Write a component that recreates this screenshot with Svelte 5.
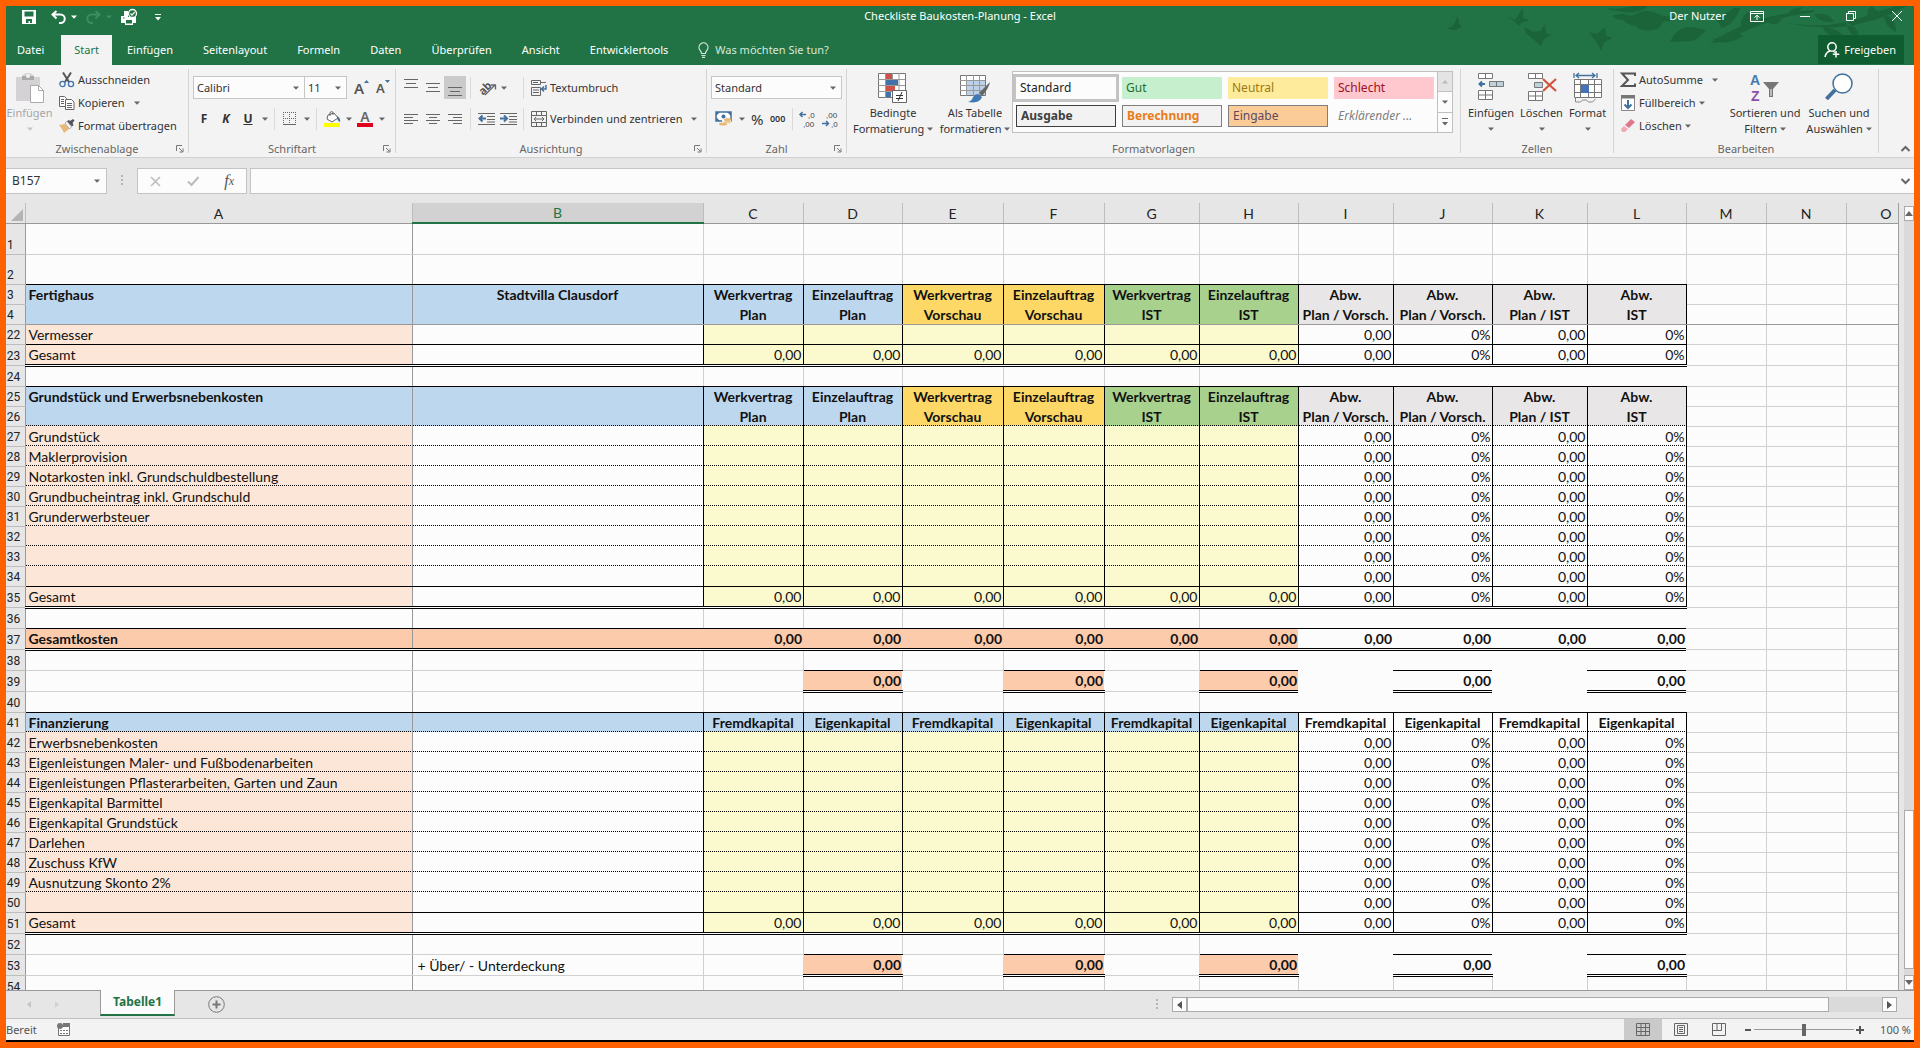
<script lang="ts">
	type Row = {
		n: number;
		kind: string;
		bottom: string;
		size?: string;
		a?: string;
		b?: string;
		cells?: string[];
	};

	const tabs = ['Datei', 'Start', 'Einfügen', 'Seitenlayout', 'Formeln', 'Daten', 'Überprüfen', 'Ansicht', 'Entwicklertools'];
	const letters = 'ABCDEFGHIJKLMNO'.split('');

	const styles = [
		{ t: 'Standard', c: 'std' },
		{ t: 'Gut', c: 'good' },
		{ t: 'Neutral', c: 'neutral' },
		{ t: 'Schlecht', c: 'bad' },
		{ t: 'Ausgabe', c: 'output' },
		{ t: 'Berechnung', c: 'calc' },
		{ t: 'Eingabe', c: 'entry' },
		{ t: 'Erklärender ...', c: 'note' }
	];

	const none = Array(10).fill('');
	const six = Array(6).fill('0,00');
	const deviation = ['0,00', '0%', '0,00', '0%'];
	const open = [...Array(6).fill(''), ...deviation];
	const total = [...six, ...deviation];
	const sum = Array(10).fill('0,00');
	const diff = sum.map((v, i) => (i % 2 ? v : ''));
	const top = ['Werkvertrag', 'Einzelauftrag', 'Werkvertrag', 'Einzelauftrag', 'Werkvertrag', 'Einzelauftrag', 'Abw.', 'Abw.', 'Abw.', 'Abw.'];
	const sub = ['Plan', 'Plan', 'Vorschau', 'Vorschau', 'IST', 'IST', 'Plan / Vorsch.', 'Plan / Vorsch.', 'Plan / IST', 'IST'];
	const capital = sum.map((_, i) => (i % 2 ? 'Eigenkapital' : 'Fremdkapital'));

	function items(start: number, names: string[]): Row[] {
		return names.map((a, i) => ({
			n: start + i,
			kind: 'item',
			bottom: i === names.length - 1 ? 'line' : 'dots',
			a,
			cells: open
		}));
	}

	const rows: Row[] = [
		{ n: 1, kind: 'blank', bottom: 'grid', size: 'taller' },
		{ n: 2, kind: 'blank', bottom: 'line', size: 'tall' },
		{ n: 3, kind: 'head', bottom: 'none', a: 'Fertighaus', b: 'Stadtvilla Clausdorf', cells: top },
		{ n: 4, kind: 'head', bottom: 'freeze', cells: sub },
		...items(122, ['Vermesser']),
		{ n: 123, kind: 'item', bottom: 'double', size: 'mid', a: 'Gesamt', cells: total },
		{ n: 124, kind: 'gap', bottom: 'line', size: 'mid' },
		{ n: 125, kind: 'head', bottom: 'none', a: 'Grundstück und Erwerbsnebenkosten', cells: top },
		{ n: 126, kind: 'head', bottom: 'dots', cells: sub },
		...items(127, [
			'Grundstück',
			'Maklerprovision',
			'Notarkosten inkl. Grundschuldbestellung',
			'Grundbucheintrag inkl. Grundschuld',
			'Grunderwerbsteuer',
			'',
			'',
			''
		]),
		{ n: 135, kind: 'item', bottom: 'double', size: 'mid', a: 'Gesamt', cells: total },
		{ n: 136, kind: 'gap', bottom: 'line', size: 'mid' },
		{ n: 137, kind: 'sum', bottom: 'double', size: 'mid', a: 'Gesamtkosten', cells: sum },
		{ n: 138, kind: 'gap', bottom: 'alt-line', size: 'mid' },
		{ n: 139, kind: 'diff', bottom: 'alt-double', size: 'mid', cells: diff },
		{ n: 140, kind: 'gap', bottom: 'line', size: 'mid' },
		{ n: 141, kind: 'fin', bottom: 'dots', a: 'Finanzierung', cells: capital },
		...items(142, [
			'Erwerbsnebenkosten',
			'Eigenleistungen Maler- und Fußbodenarbeiten',
			'Eigenleistungen Pflasterarbeiten, Garten und Zaun',
			'Eigenkapital Barmittel',
			'Eigenkapital Grundstück',
			'Darlehen',
			'Zuschuss KfW',
			'Ausnutzung Skonto 2%',
			''
		]),
		{ n: 151, kind: 'item', bottom: 'double', size: 'mid', a: 'Gesamt', cells: total },
		{ n: 152, kind: 'gap', bottom: 'alt-line', size: 'mid' },
		{ n: 153, kind: 'diff', bottom: 'alt-double', size: 'mid', b: '+ Über/ - Unterdeckung', cells: diff },
		{ n: 154, kind: 'blank', bottom: 'grid', size: 'mid' }
	];

	function fill(row: Row, i: number) {
		if (i > 11) return '';
		if (row.kind === 'head') return i < 4 ? 'blue' : i < 6 ? 'gold' : i < 8 ? 'green' : 'grey';
		if (row.kind === 'fin') return i < 8 ? 'blue' : '';
		if (row.kind === 'item') return i === 0 ? 'peach' : i > 1 && i < 8 ? 'cream' : '';
		if (row.kind === 'sum') return i < 8 ? 'salmon' : '';
		if (row.kind === 'diff') return i > 2 && i < 8 && i % 2 ? 'salmon' : '';
		return '';
	}

	function right(row: Row, i: number) {
		if (i === 0) return 'r-freeze';
		if (i > 11 || row.kind === 'blank') return 'r-grid';
		if (row.kind === 'gap') return i < 7 ? 'r-grid' : '';
		if (row.kind === 'diff') return i === 1 ? 'r-grid' : '';
		if (row.kind === 'sum') return '';
		return 'r-line';
	}

	function bottom(row: Row, i: number) {
		if (row.bottom === 'freeze') return 'b-freeze';
		if (i > 11) return 'b-grid';
		if (row.bottom.startsWith('alt-')) {
			if (i > 2 && i % 2) return 'b-' + row.bottom.slice(4);
			return i < 8 ? 'b-grid' : '';
		}
		return 'b-' + row.bottom;
	}

	function align(row: Row, i: number) {
		if (i === 0) return '';
		if (row.kind === 'head' || row.kind === 'fin') return 'center';
		return i === 1 ? 'indent' : 'num';
	}

	function cell(row: Row, i: number) {
		if (i === 0) return row.a ?? '';
		if (i === 1) return row.b ?? '';
		return (row.cells ?? none)[i - 2] ?? '';
	}

	let cellName = $state('B157');
	let formula = $state('');
	let zoom = $state(50);
</script>

<svelte:head><title>Checkliste Baukosten-Planung - Excel</title></svelte:head>

{#snippet caret()}
	<svg class="caret" width="6" height="4" viewBox="0 0 6 4" aria-hidden="true"><path d="M0 0.5h6L3 3.8z" fill="currentColor" /></svg>
{/snippet}

{#snippet footer(title, launcher = true)}
	<div class="foot">
		<span>{title}</span>
		{#if launcher}
			<button class="launch" aria-label={title + ' Optionen'}>
				<svg width="8" height="8" viewBox="0 0 8 8" fill="none" stroke="#777"><path d="M0.500 6V0.500H6M3 3l3.500 3.500M7 3.500V7H3.500" /></svg>
			</button>
		{/if}
	</div>
{/snippet}

{#snippet lines(kind, y)}
	<svg width="16" height="22" viewBox="0 0 16 22" stroke="#666" fill="none">
		{#if kind === 'mid'}
			<path d={`M1 ${y + 0.5}h14M3 ${y + 4.5}h10M1 ${y + 8.5}h14`} />
		{:else if kind === 'left'}
			<path d="M1 6.500h14M1 9.500h9M1 12.500h14M1 15.500h9" />
		{:else if kind === 'center'}
			<path d="M1 6.500h14M4 9.500h8M1 12.500h14M4 15.500h8" />
		{:else}
			<path d="M1 6.500h14M6 9.500h9M1 12.500h14M6 15.500h9" />
		{/if}
	</svg>
{/snippet}

{#snippet indent(out)}
	<svg width="17" height="14" viewBox="0 0 17 14" fill="none" stroke="#666">
		<path d="M0 1.500h17M9 4.500h8M9 7.500h8M0 12.500h17M9 10h8" />
		<path d={out ? 'M8 6.500H2M4.500 3.500l-3 3 3 3' : 'M0 6.500h6M4 3.500l3 3-3 3'} stroke="#41719c" stroke-width="2" />
	</svg>
{/snippet}

<div class="window">
	<header>
		<svg class="leaves" width="480" height="48" viewBox="0 0 480 48" fill="#1b6339" aria-hidden="true">
			<path d="M13 22q8 0 10-12 2 4 2 8 4 2 0 4-4 4-12 0zM73 10l8 4 8-12 0 10 6 2-8 3-2 3-4-4zM90 21l9 5 8-1 4-7 1 10 6 1-8 4-3 7-7-6-8-7zM155 26l8 2 8-7 1 9 7 2-9 4-3 9-4-8z" />
			<path d="M172 2q14 2 26-2h16q-8 8-24 6t-18-4zM178 10q8-4 20 0 14-8 24-3 12 6 22 2-4 8-14 6l-6 8q-18 4-22-3-10-2-12-6-8 0-12-4z" />
			<path d="M236 36q6-15 22-15l14 3q-8 10-14 11zM278 33q10 0 16-7 10 0 16 4-14 8-26 6zM282 12q10-4 18-10l6 0q-2 8-10 16l-8 4z" />
			<path d="M276 37Q320 8 380 4l0 2Q330 12 290 36zM308 24q-4-10 6-18 6 8 2 16zM332 16q6-6 16-4-4 10-16 4zM352 10q4-8 16-9l-4 8z" />
			<path d="M342 14q50 14 100-8l20-6h10q-20 12-40 16-40 12-90-2zM388 20q14 2 22 10-16 4-22-10zM412 16q2 12 12 16 2-10-12-16zM436 12q-6-8 2-12l6 6zM450 8q12 4 12 18-12-6-12-18zM380 8q16-2 20 8-14 2-20-8z" />
		</svg>
		<div class="titlebar">
			<div class="quick">
				<button class="save" aria-label="Speichern">
					<svg width="14" height="14" viewBox="0 0 14 14"><path d="M0 0h14v14H0z" fill="#fff" /><path d="M2.500 1.500h9v5h-9zM4 9h6v4H8v-2H6.500v2H4z" fill="#217346" /></svg>
				</button>
				<button aria-label="Rückgängig">
					<svg width="15" height="14" viewBox="0 0 15 14" fill="none" stroke="#fff" stroke-width="2"><path d="M5.500 1L1.500 4.500l4 4M2 4.500h7.500a4 4 0 0 1 0 8.500H8" /></svg>
					{@render caret()}
				</button>
				<button class="off" aria-label="Wiederholen">
					<svg width="15" height="14" viewBox="0 0 15 14" fill="none" stroke="currentColor" stroke-width="2"><path d="M9.500 1l4 3.500-4 4M13 4.500H5.500a4 4 0 0 0 0 8.500H7" /></svg>
					{@render caret()}
				</button>
				<button aria-label="Seitenansicht und Drucken">
					<svg width="17" height="16" viewBox="0 0 17 16"><path d="M0 7h3V2h4v6h8v6h-3v2H4v-2H0z" fill="#fff" /><circle cx="11.500" cy="4.500" r="4" fill="#217346" stroke="#fff" stroke-width="1.300" /><path d="M9.500 4.500l1.500 1.600 2.800-3.200" fill="none" stroke="#fff" stroke-width="1.200" /><path d="M5 11h6v3.500H5z" fill="#217346" /><path d="M2 9h1.500" stroke="#217346" /></svg>
				</button>
				<button class="more" aria-label="Symbolleiste anpassen">
					<svg width="6" height="7" viewBox="0 0 6 7" fill="#fff"><path d="M0 0h6v1H0zM0 3h6L3 6.500z" /></svg>
				</button>
			</div>
			<h1>Checkliste Baukosten-Planung - Excel</h1>
			<div class="controls">
				<span>Der Nutzer</span>
				<button aria-label="Menüband-Anzeigeoptionen">
					<svg width="14" height="11" viewBox="0 0 14 11" fill="none" stroke="#fff"><path d="M0.500 0.500h13v10h-13zM0.500 2.500h13M7 9V4.500M4.500 6.500L7 4.200l2.500 2.300" /></svg>
				</button>
				<button aria-label="Minimieren"><svg width="10" height="10" viewBox="0 0 10 10" stroke="#fff"><path d="M0 5.500h10" /></svg></button>
				<button aria-label="Verkleinern">
					<svg width="10" height="10" viewBox="0 0 10 10" fill="none" stroke="#fff"><path d="M0.500 2.500h7v7h-7zM2.500 2V0.500h7v7H8" /></svg>
				</button>
				<button aria-label="Schließen"><svg width="10" height="10" viewBox="0 0 10 10" stroke="#fff"><path d="M0 0l10 10M10 0L0 10" /></svg></button>
			</div>
		</div>
		<nav class="tabs">
			{#each tabs as t}
				<button class="tab" class:active={t === 'Start'}>{t}</button>
			{/each}
			<button class="tab tell">
				<svg width="11" height="15" viewBox="0 0 11 15" fill="none" stroke="#d6e8dc" stroke-width="1.200"><path d="M3.500 10.500Q3.500 8.500 2 7.200a4.500 4.500 0 1 1 7 0Q7.500 8.500 7.500 10.500zM3.500 12.500h4M4 14.300h3" /></svg>
				Was möchten Sie tun?
			</button>
			<button class="share">
				<svg width="16" height="16" viewBox="0 0 16 16" fill="none" stroke="#fff" stroke-width="1.500"><circle cx="8" cy="5" r="4.200" /><path d="M1 15q1-5 5-6M9.500 9.500l1.500 1M12 9v6.500M8.800 12.300h6.500" /></svg>
				Freigeben
			</button>
		</nav>
	</header>

	<section class="ribbon" aria-label="Menüband">
		<div class="group clip">
			<div class="body">
				<button class="big off">
					<svg width="28" height="30" viewBox="0 0 28 30"><path d="M0 4h6q1-4 6-4t6 4h6v24H0z" fill="#d4d2d4" /><path d="M6 3h12v4H6z" fill="#aaa" /><circle cx="12" cy="3" r="2" fill="#f3f3f3" /><path d="M14.500 12.500h8l5 5v12h-13z" fill="#fff" stroke="#aaa" /><path d="M22.500 12.500v5h5" fill="none" stroke="#aaa" /></svg>
					<span>Einfügen</span>
					<span>{@render caret()}</span>
				</button>
				<div class="stack">
					<button>
						<svg width="16" height="16" viewBox="0 0 16 16" fill="none"><path d="M4 0.500l6 9.500M12 0.500L6 10" stroke="#555" stroke-width="2" /><circle cx="3.500" cy="12" r="2.600" stroke="#3f72a8" stroke-width="1.300" /><circle cx="12" cy="12" r="2.600" stroke="#3f72a8" stroke-width="1.300" /></svg>
						Ausschneiden
					</button>
					<button>
						<svg width="16" height="14" viewBox="0 0 16 14" fill="#fff" stroke="#666"><path d="M0.500 0.500h5l2 2v8h-7zM2 3.500h3M2 5.500h3M2 7.500h3" /><path d="M6.500 3.500h6l2.500 2.500v7.500H6.500zM8 7.500h5M8 9.500h5M8 11.500h5" /></svg>
						Kopieren <i class="wide">{@render caret()}</i>
					</button>
					<button>
						<svg width="16" height="14" viewBox="0 0 16 14"><path d="M0 6l6-1 4 5-5 4q-1-3-5-8z" fill="#e8b877" /><path d="M6 4l2-1.500L12.500 8l-2 2z" fill="#fff" stroke="#777" stroke-width="0.600" /><path d="M8 2l2-1 1 1L14 0l1.500 1.500-2 2.500 1 2-1.500 1.500z" fill="#55505a" /></svg>
						Format übertragen
					</button>
				</div>
			</div>
			{@render footer('Zwischenablage')}
		</div>

		<div class="group font">
			<div class="lines">
				<div class="line">
					<label class="combo family"><select aria-label="Schriftart"><option>Calibri</option></select>{@render caret()}</label>
					<label class="combo size"><select aria-label="Schriftgrad"><option>11</option></select>{@render caret()}</label>
					<button class="letter grow">A<svg width="5" height="3" viewBox="0 0 5 3"><path d="M0 3h5L2.500 0z" fill="#41719c" /></svg></button>
					<button class="letter shrink">A<svg width="5" height="3" viewBox="0 0 5 3"><path d="M0 0h5L2.500 3z" fill="#41719c" /></svg></button>
				</div>
				<div class="line biu">
					<button><b>F</b></button>
					<button><b><em>K</em></b></button>
					<button><b><u>U</u></b></button>
					{@render caret()}
					<i class="sep"></i>
					<button aria-label="Rahmen"><svg width="14" height="14" viewBox="0 0 14 14" fill="none" stroke="#666"><path d="M0.500 0v12M6.500 0v12M12.500 0v12M0 0.500h13M0 6.500h13" stroke-dasharray="1 1" /><path d="M0 12.500h13" /></svg></button>
					{@render caret()}
					<i class="sep"></i>
					<button aria-label="Füllfarbe"><svg width="17" height="16" viewBox="0 0 17 16"><path d="M4 4l6-2 4 5-6 4-5-3z" fill="#fff" stroke="#666" /><path d="M6 5V1.500q2-2 3 0V4" fill="none" stroke="#666" /><path d="M13 5q4 2 3 6-3-1-3-6z" fill="#41719c" /><path d="M0 12h16v4H0z" fill="#ffff00" /></svg></button>
					{@render caret()}
					<button aria-label="Schriftfarbe"><span class="fontcolor">A</span></button>
					{@render caret()}
				</div>
			</div>
			{@render footer('Schriftart')}
		</div>

		<div class="group align">
			<div class="lines">
				<div class="line">
					<button class="sq" aria-label="Oben">{@render lines('mid', 2)}</button>
					<button class="sq" aria-label="Mitte">{@render lines('mid', 6)}</button>
					<button class="sq on" aria-label="Unten">{@render lines('mid', 10)}</button>
					<i class="sep"></i>
					<button class="sq turn" aria-label="Ausrichtung">
						<svg width="17" height="16" viewBox="0 0 17 16"><text x="-2" y="12" font-size="11" font-weight="700" fill="#555" transform="rotate(-45 5 8)">ab</text><path d="M5 15L15 5M11 5h4.500v4.500" fill="none" stroke="#666" stroke-width="1.300" /></svg>
						{@render caret()}
					</button>
					<i class="sep"></i>
					<button class="wrap">
						<svg width="16" height="16" viewBox="0 0 16 16" fill="none" stroke="#666"><path d="M0.500 0.500h9v4h-9zM2 2.500h5M0.500 7.500h9v8h-9zM2 10h6M2 12.500h6M10 2.500h5" /><path d="M15 5v4h-4M13 6.500L10.500 9l2.500 2.500" stroke="#41719c" stroke-width="1.500" /></svg>
						Textumbruch
					</button>
				</div>
				<div class="line">
					<button class="sq" aria-label="Linksbündig">{@render lines('left', 0)}</button>
					<button class="sq" aria-label="Zentriert">{@render lines('center', 0)}</button>
					<button class="sq" aria-label="Rechtsbündig">{@render lines('right', 0)}</button>
					<i class="sep"></i>
					<button class="sq" aria-label="Einzug verkleinern">{@render indent(true)}</button>
					<button class="sq" aria-label="Einzug vergrößern">{@render indent(false)}</button>
					<i class="sep"></i>
					<button class="wrap">
						<svg width="16" height="16" viewBox="0 0 16 16" fill="none" stroke="#666"><path d="M0.500 0.500h15v15H0.500zM0.500 4.500h15M0.500 11.500h15M5.500 0v4M10.500 0v4M5.500 12v4M10.500 12v4M3 8h10M5 6L3 8l2 2M11 6l2 2-2 2" /></svg>
						Verbinden und zentrieren <i class="wide">{@render caret()}</i>
					</button>
				</div>
			</div>
			{@render footer('Ausrichtung')}
		</div>

		<div class="group number">
			<div class="lines">
				<div class="line">
					<label class="combo format"><select aria-label="Zahlenformat"><option>Standard</option></select>{@render caret()}</label>
				</div>
				<div class="line nums">
					<button aria-label="Buchhaltungszahlenformat"><svg width="17" height="16" viewBox="0 0 17 16"><path d="M1 1h15v9H1z" fill="#fff" stroke="#41719c" stroke-width="1.500" /><path d="M1 1h4L1 5zM16 1h-4l4 4zM1 10V6l4 4z" fill="#41719c" /><circle cx="8.500" cy="5.500" r="2" fill="#41719c" /><path d="M7 9h9v6H7z" fill="#f3f3f3" /><ellipse cx="12.500" cy="8.500" rx="3.500" ry="1.500" fill="#e8b877" /><ellipse cx="12.500" cy="11" rx="3.500" ry="1.300" fill="#eccb9a" /><ellipse cx="8" cy="13" rx="4" ry="1.500" fill="#e8b877" /></svg></button>
					{@render caret()}
					<button class="pct">%</button>
					<button class="ooo">000</button>
					<i class="sep"></i>
					<button class="dec" aria-label="Dezimalstelle hinzufügen"><svg width="16" height="18" viewBox="0 0 16 18"><path d="M7 4.500H1M3.500 2L1 4.500 3.500 7" fill="none" stroke="#41719c" stroke-width="1.500" /><text x="9" y="8">,0</text><text x="4" y="17">,00</text></svg></button>
					<button class="dec" aria-label="Dezimalstelle entfernen"><svg width="16" height="18" viewBox="0 0 16 18"><text x="4" y="8">,00</text><path d="M0 13.500h6M4 11l2.500 2.500L4 16" fill="none" stroke="#41719c" stroke-width="1.500" /><text x="9" y="17">,0</text></svg></button>
				</div>
			</div>
			{@render footer('Zahl')}
		</div>

		<div class="group formats">
			<div class="body">
				<button class="big cond">
					<svg width="30" height="30" viewBox="0 0 30 30"><path d="M0.500 0.500h27v24h-27z" fill="#fff" stroke="#777" /><path d="M7.500 0v25M14.500 0v25M21 0v25M0 6.500h27M0 12.500h27M0 18.500h27" stroke="#999" /><path d="M8 1h6v5H8zM8 13h9v5H8z" fill="#d0504a" /><path d="M8 7h12v5H8zM8 19h5v5H8z" fill="#4273a8" /><path d="M14.500 17.500h14v12h-14z" fill="#fff" stroke="#666" /><path d="M18 22.500h7M18 25.500h7M24 19l-4 9" stroke="#333" /></svg>
					<span>Bedingte</span>
					<span>Formatierung {@render caret()}</span>
				</button>
				<button class="big table">
					<svg width="30" height="30" viewBox="0 0 30 30"><path d="M0.500 2.500h25v20h-25z" fill="#fff" stroke="#777" /><path d="M7 8h18v14H7z" fill="#bcd0e8" /><path d="M6.500 2v21M13.500 2v21M19.500 2v21M0 7.500h25M0 12.500h25M0 17.500h25" stroke="#999" /><path d="M30 9L19 20l3 3q7-8 8-14z" fill="#666" /><path d="M18 21l4 3q-2 7-14 5 4-1 5-5 2-3 5-3z" fill="#3f7ab5" /></svg>
					<span>Als Tabelle</span>
					<span>formatieren {@render caret()}</span>
				</button>
				<div class="gallery">
					<div class="swatches">
						{#each styles as s}
							<button class="swatch {s.c}">{s.t}</button>
						{/each}
					</div>
					<div class="spin">
						<button class="dim" aria-label="Nach oben"><svg width="6" height="4" viewBox="0 0 6 4"><path d="M0 3.500h6L3 0z" fill="#bbb" /></svg></button>
						<button aria-label="Nach unten">{@render caret()}</button>
						<button aria-label="Mehr"><svg width="6" height="8" viewBox="0 0 6 8" fill="#666"><path d="M0 0h6v1H0zM0 4h6L3 7.500z" /></svg></button>
					</div>
				</div>
			</div>
			{@render footer('Formatvorlagen', false)}
		</div>

		<div class="group cells">
			<div class="body">
				<button class="big">
					<svg width="28" height="30" viewBox="0 0 28 30" fill="#fff" stroke="#777"><path d="M1.500 0.500h14v5h-14zM8.500 0.500v5M1.500 17.500h14v9h-14zM8.500 17.500v9M1.500 22h14" /><path d="M12.500 8.500h14v5h-14zM19.500 8.500v5" fill="#bfd2dc" /><path d="M8 11H2.500M5 8.500L2.500 11 5 13.500" fill="none" stroke="#41719c" stroke-width="2" /></svg>
					<span>Einfügen</span>
					<span>{@render caret()}</span>
				</button>
				<button class="big">
					<svg width="30" height="30" viewBox="0 0 30 30" fill="#fff" stroke="#777"><path d="M1.500 0.500h14v5h-14zM8.500 0.500v5M1.500 18.500h14v9h-14zM8.500 18.500v9M1.500 23h14" /><path d="M7.500 9.500h8v5h-8z" fill="#bfd2dc" /><path d="M16 6l13 12M29 6L16 18" stroke="#d2533c" stroke-width="2.200" /></svg>
					<span>Löschen</span>
					<span>{@render caret()}</span>
				</button>
				<button class="big">
					<svg width="30" height="30" viewBox="0 0 30 30" fill="#fff" stroke="#777"><path d="M1.500 6.500h27v18h-27zM7.500 6.500v18M15.500 6.500v18M21.500 6.500v18M1.500 11.500h27M1.500 19.500h27" /><path d="M8 12h8v8H8z" fill="#4273b5" stroke="none" /><path d="M1 0v5M24 0v5M3 2.500h19M6 0L3 2.500 6 5M19 0l3 2.500L19 5" fill="none" stroke="#41719c" stroke-width="1.300" /><path d="M2.500 25v4h5l2-2h4l2 2h4l3-3" fill="none" stroke="#888" /></svg>
					<span>Format</span>
					<span>{@render caret()}</span>
				</button>
			</div>
			{@render footer('Zellen', false)}
		</div>

		<div class="group edit">
			<div class="body">
				<div class="stack">
					<button>
						<svg width="16" height="16" viewBox="0 0 16 16" fill="none" stroke="#555" stroke-width="2"><path d="M15 4V1.500H2l6 6.500-6 6h13V11.500" /></svg>
						AutoSumme <i class="wide">{@render caret()}</i>
					</button>
					<button>
						<svg width="16" height="16" viewBox="0 0 16 16"><path d="M1.500 0.500h13v15h-13z" fill="#fff" stroke="#888" /><path d="M1 0h14v3.500H1z" fill="#777" /><path d="M8 5v8M4.500 9.500L8 13l3.500-3.500" fill="none" stroke="#41719c" stroke-width="2" /></svg>
						Füllbereich {@render caret()}
					</button>
					<button>
						<svg width="16" height="14" viewBox="0 0 16 14"><path d="M5 6l6-6 4 3-6 6z" fill="#e0788c" /><path d="M4 7l4 3-3 3H2L1 10z" fill="#f0a9b6" /></svg>
						Löschen {@render caret()}
					</button>
				</div>
				<button class="big sort">
					<svg width="30" height="30" viewBox="0 0 30 30"><text x="0" y="12" fill="#4579ad">A</text><text x="1" y="28" fill="#8b4fa8">Z</text><path d="M13 9h16l-6 7v8h-4v-8z" fill="#777" /><path d="M20.500 16h1v7h-1z" fill="#fff" /></svg>
					<span>Sortieren und</span>
					<span>Filtern {@render caret()}</span>
				</button>
				<button class="big find">
					<svg width="28" height="30" viewBox="0 0 28 30" fill="none"><path d="M1.500 26L10 17" stroke="#41719c" stroke-width="4" /><circle cx="17.500" cy="10.500" r="9.500" fill="#fff" stroke="#41719c" stroke-width="1.500" /></svg>
					<span>Suchen und</span>
					<span>Auswählen {@render caret()}</span>
				</button>
			</div>
			{@render footer('Bearbeiten', false)}
		</div>
		<button class="collapse" aria-label="Menüband reduzieren"><svg width="9" height="6" viewBox="0 0 9 6" fill="none" stroke="#666" stroke-width="2"><path d="M0.500 5l4-4 4 4" /></svg></button>
	</section>

	<section class="formula" aria-label="Bearbeitungsleiste">
		<div class="name"><input aria-label="Namenfeld" bind:value={cellName} /><button aria-label="Namen">{@render caret()}</button></div>
		<i class="dots"></i>
		<div class="fx">
			<button aria-label="Abbrechen"><svg width="11" height="11" viewBox="0 0 11 11" stroke="#bbb" stroke-width="1.500"><path d="M1 1l9 9M10 1l-9 9" /></svg></button>
			<button aria-label="Eingeben"><svg width="12" height="10" viewBox="0 0 12 10" fill="none" stroke="#bbb" stroke-width="2"><path d="M1 5.500L4.500 9 11.500 1" /></svg></button>
			<button class="fn" aria-label="Funktion einfügen">f<small>x</small></button>
		</div>
		<div class="entryline">
			<input aria-label="Formel" bind:value={formula} />
			<button aria-label="Erweitern"><svg width="9" height="6" viewBox="0 0 9 6" fill="none" stroke="#666" stroke-width="2"><path d="M0.500 1l4 4 4-4" /></svg></button>
		</div>
	</section>

	<main>
		<div class="sheet">
			<table>
				<colgroup>
					<col class="w-head" />
					{#each letters as l}
						<col class="w-{l}" />
					{/each}
				</colgroup>
				<thead>
					<tr>
						<th class="corner"><svg width="12" height="12" viewBox="0 0 12 12"><path d="M12 0v12H0z" fill="#b4b4b4" /></svg></th>
						{#each letters as l}
							<th scope="col" class:selected={l === 'B'}>{l}</th>
						{/each}
					</tr>
				</thead>
				<tbody>
					{#each rows as row}
						<tr class="{row.kind} {row.size ?? ''}">
							<th scope="row">{row.n}</th>
							{#each letters as _, i}
								<td class="{fill(row, i)} {right(row, i)} {bottom(row, i)} {align(row, i)}">{cell(row, i)}</td>
							{/each}
						</tr>
					{/each}
				</tbody>
			</table>
		</div>
		<div class="vscroll">
			<button aria-label="Nach oben blättern"><svg width="8" height="5" viewBox="0 0 8 5"><path d="M0 5h8L4 0z" fill="#666" /></svg></button>
			<div class="track"><div class="thumb"></div></div>
			<button aria-label="Nach unten blättern"><svg width="8" height="5" viewBox="0 0 8 5"><path d="M0 0h8L4 5z" fill="#666" /></svg></button>
		</div>
	</main>

	<div class="sheets">
		<div class="nav">
			<button aria-label="Vorheriges Blatt"><svg width="4" height="7" viewBox="0 0 4 7"><path d="M4 0v7L0 3.500z" fill="#c4c4c4" /></svg></button>
			<button aria-label="Nächstes Blatt"><svg width="4" height="7" viewBox="0 0 4 7"><path d="M0 0v7l4-3.500z" fill="#d2d2d2" /></svg></button>
		</div>
		<button class="sheettab">Tabelle1</button>
		<button class="add" aria-label="Neues Blatt"><svg width="17" height="17" viewBox="0 0 17 17" fill="none" stroke="#777"><circle cx="8.500" cy="8.500" r="7.800" /><path d="M4.500 8.500h8M8.500 4.500v8" stroke-width="2" /></svg></button>
		<i class="dots"></i>
		<div class="hscroll">
			<button aria-label="Nach links blättern"><svg width="5" height="8" viewBox="0 0 5 8"><path d="M5 0v8L0 4z" fill="#555" /></svg></button>
			<div class="thumb"></div>
			<div class="track"></div>
			<button aria-label="Nach rechts blättern"><svg width="5" height="8" viewBox="0 0 5 8"><path d="M0 0v8l5-4z" fill="#555" /></svg></button>
		</div>
	</div>

	<footer>
		<span>Bereit</span>
		<svg class="macro" width="14" height="13" viewBox="0 0 14 13"><path d="M1.500 3.500h11v9h-11z" fill="#fff" stroke="#777" /><path d="M6 0h7v4H6z" fill="#777" /><circle cx="3" cy="3" r="3" fill="#777" /><path d="M3 7.500h8M3 10.500h8" stroke="#777" stroke-dasharray="2 1" /></svg>
		<div class="views">
			<button class="on" aria-label="Normal"><svg width="14" height="13" viewBox="0 0 14 13" fill="none" stroke="#666"><path d="M0.500 0.500h13v12H0.500zM0.500 4.500h13M0.500 8.500h13M5 0v13M9.500 0v13" /></svg></button>
			<button aria-label="Seitenlayout"><svg width="14" height="13" viewBox="0 0 14 13" fill="none" stroke="#666"><path d="M0.500 0.500h13v12H0.500zM3.500 2.500h7v8h-7zM5 4.500h4M5 6.500h4M5 8.500h4" /></svg></button>
			<button aria-label="Umbruchvorschau"><svg width="14" height="13" viewBox="0 0 14 13" fill="none" stroke="#666"><path d="M0.500 0.500h13v12H0.500zM5 0v7.500M9.500 0v7.500M0 7.500h9.500" /></svg></button>
		</div>
		<button class="step" aria-label="Verkleinern"><svg width="8" height="8" viewBox="0 0 8 8" stroke="#555" stroke-width="2"><path d="M1 4h6" /></svg></button>
		<input class="zoom" type="range" min="0" max="100" aria-label="Zoom" bind:value={zoom} />
		<button class="step" aria-label="Vergrößern"><svg width="8" height="8" viewBox="0 0 8 8" stroke="#555" stroke-width="2"><path d="M0 4h8M4 0v8" /></svg></button>
		<span class="percent">100 %</span>
	</footer>
</div>

<style>
	:global(body) {
		background: #ff6000;
	}
	.window {
		--ui: 'Noto Sans', 'Open Sans', sans-serif;
		--cell: Lato, 'Noto Sans', sans-serif;
		--edge: #bdbdbd;
		box-sizing: border-box;
		display: flex;
		flex-direction: column;
		height: 100vh;
		border: 6px solid #ff6000;
		background: #e6e6e6;
		color: #333;
		font-family: var(--ui);
		font-size: 11px;
		line-height: 16px;
		overflow: hidden;
	}
	button {
		display: flex;
		align-items: center;
		margin: 0;
		padding: 0;
		border: 0;
		background: none;
		color: inherit;
		font: inherit;
		white-space: nowrap;
	}
	input,
	select {
		box-sizing: border-box;
		min-width: 0;
		margin: 0;
		border: 0;
		background: none;
		color: inherit;
		font: inherit;
		appearance: none;
	}
	svg {
		flex: none;
		display: block;
		overflow: visible;
	}
	.caret {
		display: inline-block;
		color: #666;
		vertical-align: middle;
	}

	/* title bar and tabs */
	header {
		position: relative;
		background: #217346;
		color: #fff;
	}
	.leaves {
		position: absolute;
		top: 0;
		right: 0;
	}
	.titlebar {
		position: relative;
		display: grid;
		grid-template-columns: 1fr auto 1fr;
		align-items: start;
		height: 29px;
	}
	.quick {
		display: flex;
		align-items: center;
		gap: 9px;
		height: 22px;
		padding-left: 16px;
	}
	.quick button {
		gap: 5px;
	}
	.quick .caret {
		color: #fff;
	}
	.quick .off,
	.quick .off .caret {
		color: #3f8a60;
	}
	.quick .save {
		margin-right: 6px;
	}
	.quick .more {
		margin-left: 8px;
	}
	h1 {
		margin: 0;
		font-size: 11px;
		font-weight: 400;
		line-height: 20px;
	}
	.controls {
		display: flex;
		align-items: center;
		justify-content: flex-end;
		gap: 36px;
		height: 20px;
		padding-right: 12px;
	}
	.controls span {
		margin-right: -12px;
	}
	.tabs {
		position: relative;
		display: flex;
		height: 30px;
	}
	.tab {
		padding: 0 15px;
	}
	.tab:first-child {
		padding-left: 11px;
		padding-right: 17px;
	}
	.tab.active {
		padding: 0 13px;
		background: #f3f3f3;
		color: #217346;
	}
	.tell {
		gap: 6px;
		color: #d6e8dc;
	}
	.share {
		gap: 4px;
		height: 29px;
		margin-left: auto;
		margin-right: 10px;
		padding: 0 8px 0 6px;
		background: #0e5c2f;
	}

	/* ribbon */
	.ribbon {
		display: flex;
		flex: none;
		height: 92px;
		border-bottom: 1px solid #d0d0d0;
		background: #f3f3f3;
	}
	.group {
		box-sizing: border-box;
		display: flex;
		flex: none;
		flex-direction: column;
		justify-content: space-between;
		margin: 4px 0;
		border-right: 1px solid #d4d4d4;
	}
	.clip {
		width: 183px;
	}
	.font {
		width: 207px;
	}
	.align {
		width: 311px;
	}
	.number {
		width: 140px;
	}
	.formats {
		width: 614px;
	}
	.cells {
		width: 153px;
	}
	.edit {
		width: 265px;
	}
	.body {
		display: flex;
		align-items: flex-start;
	}
	.foot {
		display: grid;
		grid-template-columns: 1fr auto 1fr;
		align-items: center;
		height: 12px;
		padding: 0 4px;
		color: #666;
	}
	.foot span {
		grid-column: 2;
	}
	.launch {
		justify-self: end;
	}
	.big {
		flex-direction: column;
		height: 68px;
		padding-top: 4px;
	}
	.big svg:first-child {
		margin-bottom: 2px;
	}
	.big span:last-child {
		line-height: 15px;
	}
	.big.off {
		width: 47px;
		color: #a6a6a6;
	}
	.big.off .caret {
		color: #c4c4c4;
	}
	.stack {
		display: flex;
		flex-direction: column;
		margin-top: -1px;
		padding-left: 6px;
	}
	.stack button {
		gap: 3px;
		height: 23px;
	}
	.wide {
		padding-left: 6px;
		line-height: 0;
	}
	.lines {
		display: flex;
		flex-direction: column;
		gap: 8px;
		padding: 7px 4px 0;
	}
	.line {
		display: flex;
		align-items: center;
		height: 23px;
	}
	.combo {
		box-sizing: border-box;
		display: flex;
		align-items: center;
		height: 23px;
		padding: 0 5px 0 3px;
		border: 1px solid #c6c6c6;
		background: #fcfcfc;
	}
	.combo select {
		flex: 1;
		padding: 0;
	}
	.family {
		width: 112px;
	}
	.size {
		width: 43px;
		margin-left: -1px;
	}
	.format {
		width: 131px;
	}
	.letter {
		align-items: flex-start;
		margin-left: 7px;
		color: #555;
		font-weight: 600;
	}
	.grow {
		font-size: 15px;
	}
	.shrink {
		font-size: 13px;
	}
	.biu {
		font-size: 12px;
	}
	.biu button {
		justify-content: center;
		width: 22px;
	}
	.biu .caret {
		margin: 0 2px 0 3px;
	}
	.biu .sep {
		margin: 0 4px;
	}
	.sep {
		width: 1px;
		height: 22px;
		background: #dadada;
	}
	.fontcolor {
		width: 16px;
		height: 12px;
		border-bottom: 4px solid #e0001b;
		color: #666;
		font-size: 14px;
		font-weight: 600;
		line-height: 12px;
	}
	.sq {
		justify-content: center;
		width: 22px;
		height: 23px;
	}
	.sq.on {
		background: #cacaca;
	}
	.align .sep {
		margin: 0 4px;
	}
	.turn {
		gap: 4px;
		width: 44px;
	}
	.turn .caret {
		margin-right: 8px;
	}
	.wrap {
		gap: 3px;
		padding-left: 3px;
	}
	.nums {
		justify-content: space-between;
		padding: 0 4px;
	}
	.pct {
		font-size: 15px;
	}
	.ooo {
		font-size: 9px;
		font-weight: 600;
	}
	.dec text {
		fill: #444;
		font-family: 'Liberation Sans', sans-serif;
		font-size: 8px;
	}
	.cond {
		width: 92px;
	}
	.table {
		width: 72px;
		margin-right: 1px;
	}
	.gallery {
		display: flex;
		height: 62px;
		margin-top: 2px;
		box-sizing: border-box;
		border: 1px solid #c0c0c0;
		background: #fcfcfc;
	}
	.swatches {
		display: grid;
		grid-template-columns: repeat(4, 100px);
		grid-auto-rows: 22px;
		gap: 6px;
		padding: 5px 3px;
	}
	.swatch {
		box-sizing: border-box;
		padding: 0 4px;
		color: #222;
		font-size: 12px;
	}
	.std {
		outline: 3px solid #c4c2c4;
	}
	.good {
		background: #c6efce;
		color: #1f7030;
	}
	.neutral {
		background: #ffeb9c;
		color: #9c7a10;
	}
	.bad {
		background: #ffc7ce;
		color: #9c1020;
	}
	.output {
		border: 1px solid #3f3f3f;
		background: #f2f2f2;
		color: #3f3f3f;
		font-weight: 700;
	}
	.calc {
		border: 1px solid #7f7f7f;
		background: #f2f2f2;
		color: #e87d1a;
		font-weight: 700;
	}
	.entry {
		border: 1px solid #7f7f7f;
		background: #fbcb98;
		color: #5b4a60;
	}
	.note {
		color: #7f7f7f;
		font-style: italic;
	}
	.spin {
		display: flex;
		flex-direction: column;
		width: 15px;
	}
	.spin button {
		flex: 1;
		justify-content: center;
		border-left: 1px solid #c0c0c0;
	}
	.spin button + button {
		border-top: 1px solid #c0c0c0;
	}
	.spin .dim {
		background: #e4e4e4;
	}
	.cells .body {
		gap: 6px;
		padding-left: 7px;
	}
	.sort {
		width: 78px;
		margin-left: 8px;
	}
	.sort text {
		font-family: 'Liberation Sans', sans-serif;
		font-size: 14px;
		font-weight: 700;
	}
	.find {
		width: 70px;
	}
	.collapse {
		align-self: flex-end;
		margin: 0 4px 5px auto;
	}

	/* formula bar */
	.formula {
		display: flex;
		flex: none;
		height: 26px;
		padding: 10px 0 9px;
		font-size: 12px;
	}
	.name,
	.fx,
	.entryline {
		box-sizing: border-box;
		display: flex;
		align-items: center;
		border: 1px solid #c4c4c4;
		background: #fcfcfc;
	}
	.name {
		width: 101px;
		padding: 0 6px;
		border-left: 0;
	}
	.name input {
		flex: 1;
		padding: 0;
	}
	.dots {
		width: 2px;
		height: 12px;
		margin: auto 14px;
		background: repeating-linear-gradient(#b4b4b4 0 2px, transparent 2px 4px);
	}
	.fx {
		justify-content: space-between;
		width: 110px;
		padding: 0 12px;
	}
	.fn {
		color: #555;
		font-family: 'Liberation Serif', serif;
		font-size: 16px;
		font-style: italic;
	}
	.fn small {
		font-size: 12px;
	}
	.entryline {
		flex: 1;
		margin-left: 3px;
		padding: 0 4px;
		border-right: 0;
	}
	.entryline input {
		flex: 1;
	}

	/* sheet */
	main {
		display: flex;
		flex: 1;
		min-height: 0;
	}
	.sheet {
		flex: 1;
		overflow: hidden;
		border-right: 1px solid #a0a0a0;
		background: #e6e6e6;
	}
	/* the row numbers and the last column run past the window edge */
	table {
		width: calc(100% + 36px);
		margin-left: -8px;
		border-collapse: collapse;
		table-layout: fixed;
		background: #fcfcfc;
		color: #111;
		font-family: var(--cell);
		font-size: 14px;
		line-height: 18px;
	}
	.w-head {
		width: 27px;
	}
	.w-A {
		width: 387px;
	}
	.w-B {
		width: 291px;
	}
	.w-C {
		width: 100px;
	}
	.w-E,
	.w-F {
		width: 101px;
	}
	.w-G,
	.w-I,
	.w-K {
		width: 95px;
	}
	.w-D,
	.w-H,
	.w-J,
	.w-L {
		width: 99px;
	}
	.w-M,
	.w-N {
		width: 80px;
	}
	tr {
		height: 20px;
	}
	tr.mid {
		height: 21px;
	}
	tr.tall {
		height: 30px;
	}
	tr.taller {
		height: 31px;
	}
	th,
	td {
		box-sizing: border-box;
		padding: 0 1px 0 3px;
		text-align: left;
		vertical-align: bottom;
		white-space: nowrap;
	}
	th {
		padding: 0;
		background: #e6e6e6;
		color: #222;
		font-weight: 400;
		text-align: center;
	}
	thead th {
		border-right: 1px solid var(--edge);
		border-bottom: 1px solid #999;
	}
	tbody th {
		padding-right: 2px;
		border-right: 1px solid #999;
		border-bottom: 1px solid var(--edge);
		font-family: Roboto, sans-serif;
		font-size: 12px;
	}
	.corner svg {
		margin: 0 2px 2px auto;
	}
	th.selected {
		border-bottom: 2px solid #217346;
		background: #d2d2d2;
		color: #217346;
	}
	.head td,
	.fin td,
	.sum td,
	.diff .num {
		font-weight: 700;
	}
	.num {
		text-align: right;
	}
	.center {
		padding: 0 1px;
		text-align: center;
	}
	.indent {
		padding-left: 5px;
	}
	.blue {
		background: #bdd7ee;
	}
	.gold {
		background: #fdd866;
	}
	.green {
		background: #a9d18e;
	}
	.grey {
		background: #e8e6e7;
	}
	.peach {
		background: #fbe6d8;
	}
	.cream {
		background: #fbfacf;
	}
	.salmon {
		background: #fbcbac;
	}
	.r-grid {
		border-right: 1px solid #d0d0d0;
	}
	.r-line {
		border-right: 1px solid #000;
	}
	.r-freeze {
		border-right: 1px solid #999;
	}
	.b-grid {
		border-bottom: 1px solid #d0d0d0;
	}
	.b-line {
		border-bottom: 1px solid #000;
	}
	/* drawn as a background so that the column lines stay unbroken */
	.b-dots {
		background-image: repeating-linear-gradient(90deg, #000 0 1px, transparent 1px 2px);
		background-position: bottom;
		background-repeat: no-repeat;
		background-size: 100% 1px;
	}
	.b-double {
		border-bottom: 3px double #000;
	}
	.b-freeze {
		border-bottom: 1px solid #999;
	}
	.vscroll {
		display: flex;
		flex-direction: column;
		width: 10px;
		margin-left: 5px;
		padding-top: 3px;
		overflow: hidden;
	}
	.vscroll button {
		height: 15px;
		border: 1px solid #aaa;
		background: #fcfcfc;
	}
	.track {
		flex: 1;
		background: #dadada;
	}
	.vscroll .track {
		display: flex;
		flex-direction: column;
		justify-content: flex-end;
		padding-bottom: 6px;
	}
	.thumb {
		border: 1px solid #aaa;
		background: #fcfcfc;
	}
	.vscroll .thumb {
		height: 21%;
	}

	/* sheet tabs and status bar */
	.sheets {
		display: flex;
		flex: none;
		box-sizing: border-box;
		height: 28px;
		border-top: 1px solid #999;
	}
	.nav {
		display: flex;
		gap: 24px;
		width: 73px;
		padding-left: 21px;
	}
	.sheettab {
		box-sizing: border-box;
		height: 26px;
		margin-top: -1px;
		padding: 0 12px;
		border: 1px solid #999;
		border-top: 0;
		border-bottom: 2px solid #217346;
		background: #fcfcfc;
		color: #217346;
		font-size: 12px;
		font-weight: 700;
	}
	.add {
		margin-left: 33px;
	}
	.sheets .dots {
		margin: auto 14px auto auto;
	}
	.hscroll {
		display: flex;
		flex: 0 0 38%;
		height: 15px;
		margin: 6px 17px 0 0;
	}
	.hscroll button {
		justify-content: center;
		width: 15px;
		border: 1px solid #aaa;
		background: #fcfcfc;
	}
	.hscroll .thumb {
		flex: 12;
	}
	footer {
		box-sizing: border-box;
		display: flex;
		flex: none;
		align-items: center;
		height: 24px;
		border-top: 1px solid #c0c0c0;
		border-bottom: 2px solid #000;
		background: #f3f3f3;
		color: #555;
	}
	.macro {
		margin-left: 20px;
	}
	.views {
		display: flex;
		align-self: stretch;
		margin-left: auto;
		margin-right: 4px;
	}
	.views button {
		justify-content: center;
		width: 38px;
	}
	.views .on {
		background: #cacaca;
	}
	.step {
		margin: 0 2px;
	}
	.zoom {
		width: 100px;
		height: 14px;
		background: linear-gradient(#999, #999) center / 100% 1px no-repeat;
	}
	.zoom::-webkit-slider-thumb {
		width: 4px;
		height: 12px;
		background: #666;
		appearance: none;
	}
	.percent {
		margin: 0 3px 0 14px;
	}
</style>
